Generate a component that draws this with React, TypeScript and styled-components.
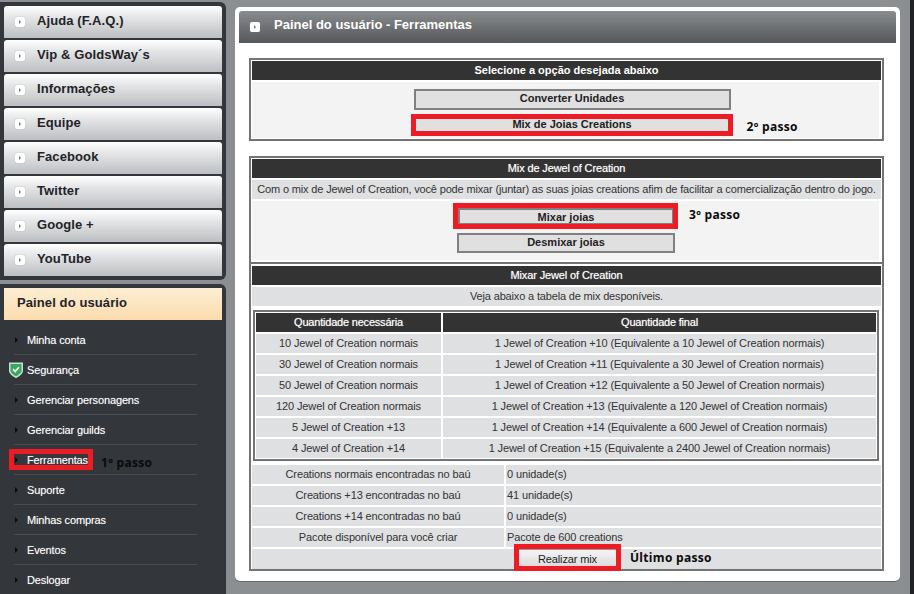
import React from 'react'
import styled, { createGlobalStyle } from 'styled-components'

const GlobalStyle = createGlobalStyle`
  html, body {
    margin: 0;
    padding: 0;
    background: #8b8f92;
  }
  * {
    box-sizing: border-box;
  }
`

const Page = styled.div`
  width: 914px;
  height: 594px;
  overflow: hidden;
  display: flex;
  align-items: flex-start;
  border-right: 4px solid #202225;
  font-family: 'Liberation Sans', Arial, sans-serif;
  font-size: 11px;
  color: #333;
`

const Sidebar = styled.aside`
  width: 226px;
  height: 594px;
  padding-top: 2px;
  display: flex;
  flex-direction: column;
  gap: 4px;
  flex: none;
`

const MenuPanel = styled.nav`
  background: #33363a;
  border-radius: 0 6px 6px 0;
  padding: 4px;
  display: flex;
  flex-direction: column;
  gap: 2px;
`

const MenuButton = styled.a`
  height: 32px;
  padding-left: 11px;
  padding-bottom: 4px;
  display: flex;
  align-items: center;
  gap: 12px;
  border-radius: 3px 3px 0 0;
  background: linear-gradient(#ffffff, #e4e5e6 35%, #bcbfc2);
  font-size: 13px;
  font-weight: bold;
  letter-spacing: 0.1px;
  color: #232327;
`

const ArrowBox = styled.span`
  width: 10px;
  height: 10px;
  margin-top: 4px;
  flex: none;
  display: flex;
  align-items: center;
  justify-content: center;
  border-radius: 2px;
  background: #fff;
  box-shadow: 0 0 1px #999;

  &::after {
    content: '';
    border-left: 2px solid #777;
    border-top: 2px solid transparent;
    border-bottom: 2px solid transparent;
  }
`

const UserPanel = styled.nav`
  flex: 1;
  background: #33363a;
  border-radius: 0 6px 0 0;
  padding: 4px;
`

const UserTitle = styled.div`
  height: 32px;
  padding: 0 0 3px 13px;
  display: flex;
  align-items: center;
  background: linear-gradient(#fdeed3, #fcdcae);
  font-size: 13px;
  font-weight: bold;
  letter-spacing: 0.1px;
  color: #23242a;
`

const UserList = styled.ul`
  list-style: none;
  margin: 5px 0 0 10px;
  padding: 0;
  width: 183px;
`

const UserItem = styled.li`
  position: relative;
  height: 30px;
  padding-left: 13px;
  display: flex;
  align-items: center;
  border-bottom: 1px solid #494b4f;
  font-size: 11px;
  letter-spacing: -0.13px;
  color: #fff;
  text-shadow: 0 0 1px #fff6;

  &:last-child {
    border-bottom: 0;
  }
`

const ItemArrow = styled.span`
  position: absolute;
  left: 1px;
  top: 12px;
  border-left: 3px solid #0c0c0c;
  border-top: 3px solid transparent;
  border-bottom: 3px solid transparent;
`

const ShieldIcon = styled.svg`
  position: absolute;
  left: -5px;
  top: 6px;
`

const Main = styled.main`
  width: 665px;
  height: 574px;
  margin: 7px 0 0 9px;
  padding: 4px;
  flex: none;
  background: #fff;
  border-radius: 5px;
  box-shadow: 0 1px 0 #66696c;
`

const MainHeader = styled.h1`
  margin: 0 0 15px;
  height: 32px;
  padding: 0 0 5px 11px;
  display: flex;
  align-items: center;
  gap: 14px;
  border-radius: 3px 3px 0 0;
  background: linear-gradient(#898c8f, #55575a);
  font-size: 13px;
  font-weight: bold;
  color: #fff;
`

const Box = styled.section`
  position: relative;
  width: 635px;
  margin: 0 0 15px 10px;
  border: 2px solid #747474;
  padding: 1px;
`

const BoxTitle = styled.div<{ $thin?: boolean }>`
  height: 19px;
  padding-bottom: 2px;
  display: flex;
  align-items: center;
  justify-content: center;
  background: #333;
  color: #fff;
  font-size: 11px;
  font-weight: ${(p) => (p.$thin ? 'normal' : 'bold')};
  letter-spacing: ${(p) => (p.$thin ? '-0.13px' : '0')};
  text-shadow: ${(p) => (p.$thin ? '0 0 1px #fff9' : 'none')};
`

const Note = styled.div`
  height: 19px;
  margin-top: 2px;
  padding-bottom: 2px;
  display: flex;
  align-items: center;
  justify-content: center;
  background: #dfe0e2;
  font-size: 11px;
  letter-spacing: -0.16px;
  white-space: nowrap;
`

const ButtonStack = styled.div<{ $top: number; $bottom: number; $gap: number; $shift: number }>`
  margin-top: 2px;
  margin-right: 2px;
  padding: ${(p) => p.$top}px 0 ${(p) => p.$bottom}px ${(p) => p.$shift}px;
  display: flex;
  flex-direction: column;
  align-items: center;
  gap: ${(p) => p.$gap}px;
  background: #f3f3f3;
`

const OptionButton = styled.div<{ $width: number; $height: number; $lift: number }>`
  position: relative;
  width: ${(p) => p.$width}px;
  height: ${(p) => p.$height}px;
  padding-bottom: ${(p) => p.$lift}px;
  display: flex;
  align-items: center;
  justify-content: center;
  border: 2px solid #808080;
  background: #e0e0e0;
  font-size: 11px;
  font-weight: bold;
  color: #222;
`

// red marks painted on top of the screenshot
const Mark = styled.span<{ $t: number; $r: number; $b: number; $l: number }>`
  position: absolute;
  top: ${(p) => p.$t}px;
  right: ${(p) => p.$r}px;
  bottom: ${(p) => p.$b}px;
  left: ${(p) => p.$l}px;
  border: 5px solid #ed1c24;
  pointer-events: none;
`

const StepLabel = styled.span<{ $x: number; $y: number }>`
  position: absolute;
  left: ${(p) => p.$x}px;
  top: ${(p) => p.$y}px;
  font-family: 'Open Sans', sans-serif;
  font-size: 12px;
  font-weight: bold;
  letter-spacing: 0.3px;
  line-height: 16px;
  white-space: nowrap;
  color: #0a0a0a;
  text-shadow: none;
`

const Divider = styled.hr`
  height: 2px;
  margin: 2px -3px;
  border: 0;
  background: #747474;
`

const MixTable = styled.div`
  width: 626px;
  margin: 4px 0 4px 1px;
  border: 2px solid #747474;
  padding: 1px;
  display: grid;
  grid-template-columns: 185px 433px;
  grid-auto-rows: 19px;
  gap: 2px;
`

const HeadCell = styled.div`
  padding-bottom: 2px;
  display: flex;
  align-items: center;
  justify-content: center;
  background: #333;
  color: #fff;
  font-size: 11px;
  letter-spacing: -0.2px;
  text-shadow: 0 0 1px #fff9;
`

const Cell = styled.div`
  padding-bottom: 2px;
  display: flex;
  align-items: center;
  justify-content: center;
  background: #dfe0e2;
  font-size: 11px;
  letter-spacing: -0.13px;
`

const InfoGrid = styled.div`
  display: grid;
  grid-template-columns: 252px 375px;
  grid-auto-rows: 19px;
  gap: 2px;
`

const InfoValue = styled(Cell)`
  justify-content: flex-start;
  padding-left: 1px;
`

const ActionRow = styled.div`
  grid-column: 1 / 3;
  height: 20px;
  position: relative;
  padding-left: 267px;
  background: #dfe0e2;
`

const SubmitButton = styled.div`
  position: relative;
  width: 97px;
  height: 17px;
  padding-top: 2px;
  display: flex;
  align-items: center;
  justify-content: center;
  border-top: 1px solid #9a9a9a;
  background: linear-gradient(#f4f4f4, #dcdcdc);
  font-size: 11px;
  letter-spacing: -0.13px;
  color: #222;
`

const tableRows = [
  ['10 Jewel of Creation normais', '1 Jewel of Creation +10 (Equivalente a 10 Jewel of Creation normais)'],
  ['30 Jewel of Creation normais', '1 Jewel of Creation +11 (Equivalente a 30 Jewel of Creation normais)'],
  ['50 Jewel of Creation normais', '1 Jewel of Creation +12 (Equivalente a 50 Jewel of Creation normais)'],
  ['120 Jewel of Creation normais', '1 Jewel of Creation +13 (Equivalente a 120 Jewel of Creation normais)'],
  ['5 Jewel of Creation +13', '1 Jewel of Creation +14 (Equivalente a 600 Jewel of Creation normais)'],
  ['4 Jewel of Creation +14', '1 Jewel of Creation +15 (Equivalente a 2400 Jewel of Creation normais)'],
]

const infoRows = [
  ['Creations normais encontradas no baú', '0 unidade(s)'],
  ['Creations +13 encontradas no baú', '41 unidade(s)'],
  ['Creations +14 encontradas no baú', '0 unidade(s)'],
  ['Pacote disponível para você criar', 'Pacote de 600 creations'],
]

const menu = ['Ajuda (F.A.Q.)', 'Vip & GoldsWay´s', 'Informações', 'Equipe', 'Facebook', 'Twitter', 'Google +', 'YouTube']

const userMenu = [
  'Minha conta',
  'Segurança',
  'Gerenciar personagens',
  'Gerenciar guilds',
  'Ferramentas',
  'Suporte',
  'Minhas compras',
  'Eventos',
  'Deslogar',
]

export default function App() {
  return (
    <Page>
      <GlobalStyle />
      <Sidebar>
        <MenuPanel>
          {menu.map((m) => (
            <MenuButton key={m}>
              <ArrowBox />
              {m}
            </MenuButton>
          ))}
        </MenuPanel>
        <UserPanel>
          <UserTitle>Painel do usuário</UserTitle>
          <UserList>
            {userMenu.map((m) => (
              <UserItem key={m}>
                {m === 'Segurança' ? (
                  <ShieldIcon width="14" height="17" viewBox="0 0 14 17">
                    <path d="M0 1.5 H14 V9.5 C14 13 10 15.5 7 17 C4 15.5 0 13 0 9.5 Z" fill="#c9ddd2" />
                    <path d="M1.5 3 H12.5 V9.3 C12.5 12 9.5 14 7 15.3 C4.5 14 1.5 12 1.5 9.3 Z" fill="#37a85c" />
                    <path d="M4 8.2 L6.2 10.4 L10 6.2" fill="none" stroke="#fff" strokeWidth="1.7" />
                  </ShieldIcon>
                ) : (
                  <ItemArrow />
                )}
                {m}
                {m === 'Ferramentas' && (
                  <>
                    <Mark $t={4} $r={104} $b={4} $l={-5} />
                    <StepLabel $x={87} $y={10}>1º passo</StepLabel>
                  </>
                )}
              </UserItem>
            ))}
          </UserList>
        </UserPanel>
      </Sidebar>
      <Main>
        <MainHeader>
          <ArrowBox />
          Painel do usuário - Ferramentas
        </MainHeader>
        <Box>
          <BoxTitle>Selecione a opção desejada abaixo</BoxTitle>
          <ButtonStack $top={7} $bottom={2} $gap={5} $shift={13}>
            <OptionButton $width={317} $height={21} $lift={4}>Converter Unidades</OptionButton>
            <OptionButton $width={317} $height={21} $lift={4}>
              Mix de Joias Creations
              <Mark $t={-3} $r={-4} $b={-2} $l={-5} />
              <StepLabel $x={331} $y={2}>2º passo</StepLabel>
            </OptionButton>
          </ButtonStack>
        </Box>
        <Box>
          <BoxTitle $thin>Mix de Jewel of Creation</BoxTitle>
          <Note>Com o mix de Jewel of Creation, você pode mixar (juntar) as suas joias creations afim de facilitar a comercialização dentro do jogo.</Note>
          <ButtonStack $top={7} $bottom={7} $gap={8} $shift={1}>
            <OptionButton $width={216} $height={17} $lift={0}>
              Mixar joias
              <Mark $t={-7} $r={-6} $b={-6} $l={-7} />
              <StepLabel $x={229} $y={-3}>3º passo</StepLabel>
            </OptionButton>
            <OptionButton $width={218} $height={20} $lift={3}>Desmixar joias</OptionButton>
          </ButtonStack>
          <Divider />
          <BoxTitle $thin>Mixar Jewel of Creation</BoxTitle>
          <Note>Veja abaixo a tabela de mix desponíveis.</Note>
          <MixTable>
            <HeadCell>Quantidade necessária</HeadCell>
            <HeadCell>Quantidade final</HeadCell>
            {tableRows.map(([need, result]) => (
              <React.Fragment key={need}>
                <Cell>{need}</Cell>
                <Cell>{result}</Cell>
              </React.Fragment>
            ))}
          </MixTable>
          <InfoGrid>
            {infoRows.map(([label, value]) => (
              <React.Fragment key={label}>
                <Cell>{label}</Cell>
                <InfoValue>{value}</InfoValue>
              </React.Fragment>
            ))}
            <ActionRow>
              <SubmitButton>
                Realizar mix
                <Mark $t={-6} $r={-5} $b={-5} $l={-5} />
                <StepLabel $x={111} $y={0}>Último passo</StepLabel>
              </SubmitButton>
            </ActionRow>
          </InfoGrid>
        </Box>
      </Main>
    </Page>
  )
}
